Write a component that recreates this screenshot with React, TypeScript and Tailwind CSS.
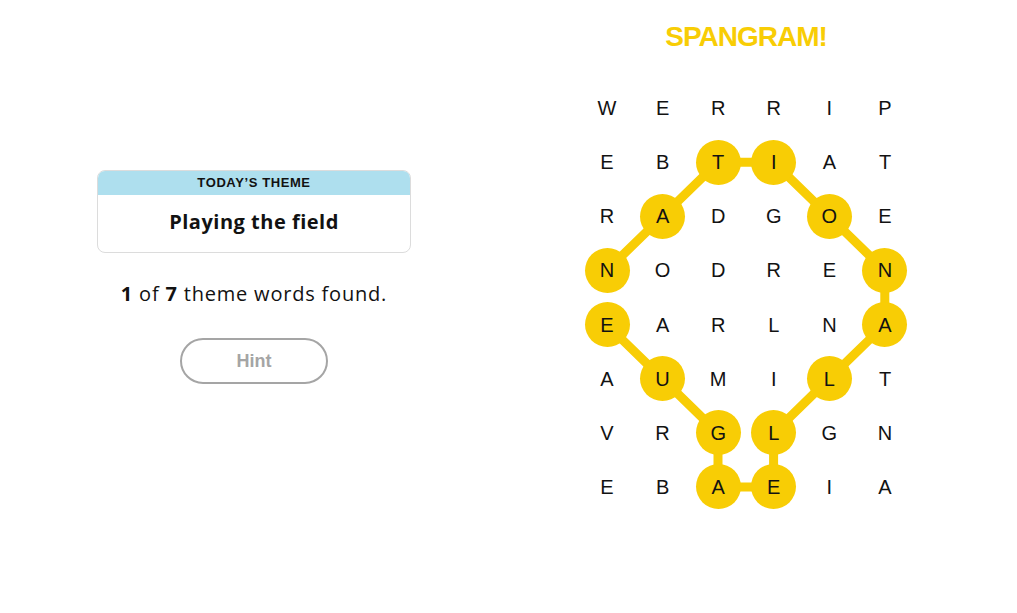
import React from "react";

// Strands-style board: theme card on the left, letter grid with the found spangram on the right.

const ROWS = [
  "WERRIP",
  "EBTIAT",
  "RADGOE",
  "NODREN",
  "EARLNA",
  "AUMILT",
  "VRGLGN",
  "EBAEIA",
];

const CW = 55.6;
const CH = 54.14;

// NATIONAL LEAGUE, in path order [row, col]
const PATH: [number, number][] = [
  [3, 0], [2, 1], [1, 2], [1, 3], [2, 4], [3, 5], [4, 5],
  [5, 4], [6, 3], [7, 3], [7, 2], [6, 2], [5, 1], [4, 0],
];

const found = new Set(PATH.map(([r, c]) => `${r}-${c}`));

function Board() {
  const pts = PATH.map(([r, c]) => `${c * CW + CW / 2},${r * CH + CH / 2}`).join(" ");
  return (
    <div className="relative w-[333.6px] h-[433px]">
      <svg className="absolute inset-0" width={333.6} height={433} viewBox="0 0 333.6 433">
        <polyline points={pts} fill="none" stroke="#f8cd05" strokeWidth={9} strokeLinejoin="round" />
      </svg>
      <div className="relative grid grid-cols-6">
        {ROWS.flatMap((row, r) =>
          row.split("").map((ch, c) => (
            <div key={`${r}-${c}`} className="h-[54.14px] flex items-center justify-center">
              <span
                className={
                  "w-[45px] h-[45px] rounded-full flex items-center justify-center text-[20px] text-[#121212] " +
                  (found.has(`${r}-${c}`) ? "bg-[#f8cd05]" : "")
                }
              >
                {ch}
              </span>
            </div>
          ))
        )}
      </div>
    </div>
  );
}

export default function App() {
  return (
    <div className="w-[1017px] h-[613px] bg-white flex font-['Liberation_Sans',Arial,sans-serif] text-[#121212]">
      <div className="w-[508px] flex flex-col items-center pt-[170px]">
        <div className="w-[314px] rounded-lg border border-[#dcdcdc] overflow-hidden">
          <div className="h-[24px] bg-[#aedfee] flex items-center justify-center text-[13px] font-semibold tracking-[0.6px] uppercase">
            Today’s Theme
          </div>
          <div className="h-[57px] flex items-center justify-center text-[20px] font-bold tracking-[0.5px] pb-[3px] font-['Open_Sans',sans-serif]">
            Playing the field
          </div>
        </div>
        <p className="mt-[29px] text-[20px] leading-6 tracking-[0.8px] font-['Open_Sans',sans-serif]">
          <b>1</b> of <b>7</b> theme words found.
        </p>
        <button className="mt-[32px] w-[148px] h-[46px] rounded-full border-2 border-[#a5a5a5] text-[#a5a5a5] text-[18px] font-bold">
          Hint
        </button>
      </div>
      <div className="w-[476px] flex flex-col items-center pt-[20px]">
        <div className="h-[34px] flex items-center text-[28px] font-bold tracking-[-1px] text-[#f8cd05]">
          SPANGRAM!
        </div>
        <div className="mt-[27px]">
          <Board />
        </div>
      </div>
    </div>
  );
}
